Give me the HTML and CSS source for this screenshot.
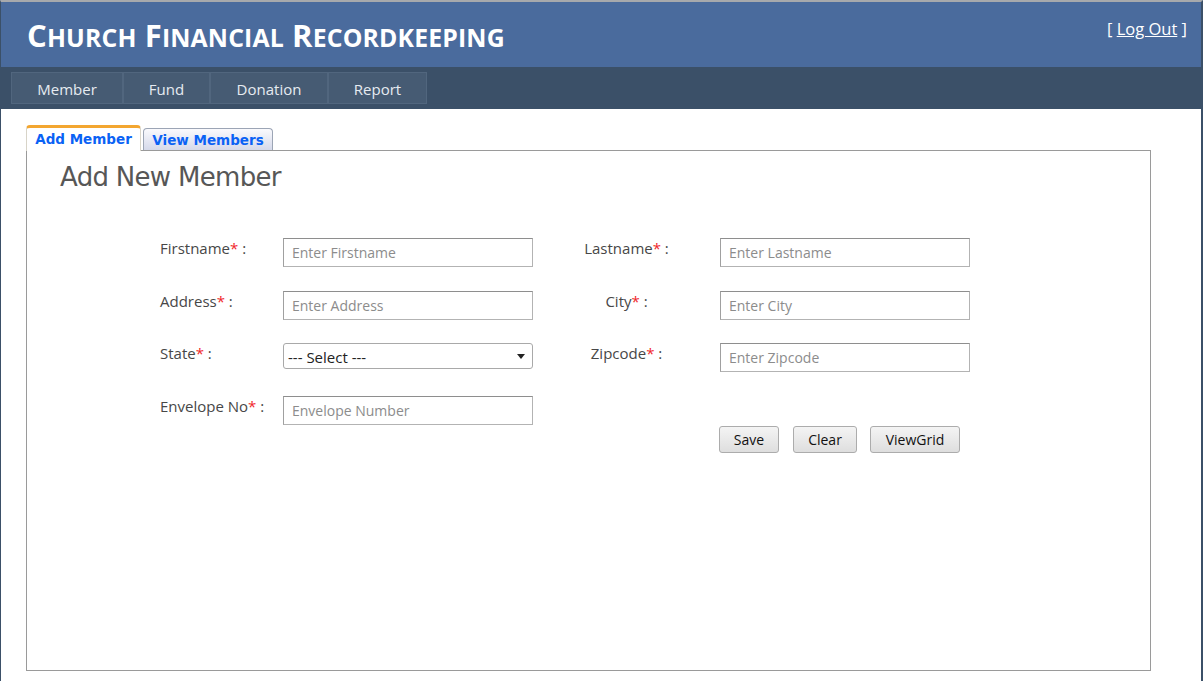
FILE: index.html
```html
<!DOCTYPE html>
<html lang="en">
<head>
<meta charset="utf-8">
<title>Church Financial Recordkeeping</title>
<link rel="stylesheet" href="styles.css">
</head>
<body>
<div class="page">
  <header class="header">
    <h1 class="title">C<span class="sc">hurch</span> F<span class="sc">inancial</span> R<span class="sc">ecordkeeping</span></h1>
    <div class="login">[ <a href="#" class="logout">Log Out</a> ]</div>
  </header>
  <nav class="nav">
    <ul class="menu">
      <li class="menu-item w-member">Member</li>
      <li class="menu-item w-fund">Fund</li>
      <li class="menu-item w-donation">Donation</li>
      <li class="menu-item w-report">Report</li>
    </ul>
  </nav>
  <main class="content">
    <div class="tabs">
      <div class="tab tab-active">Add Member</div>
      <div class="tab tab-idle">View Members</div>
    </div>
    <section class="panel">
      <h2 class="heading">Add New Member</h2>
      <form class="form">
        <label class="lbl">Firstname<span class="req">*</span> :</label>
        <input class="field" type="text" placeholder="Enter Firstname">
        <label class="lbl lbl-c">Lastname<span class="req">*</span> :</label>
        <input class="field" type="text" placeholder="Enter Lastname">

        <label class="lbl">Address<span class="req">*</span> :</label>
        <input class="field" type="text" placeholder="Enter Address">
        <label class="lbl lbl-c">City<span class="req">*</span> :</label>
        <input class="field" type="text" placeholder="Enter City">

        <label class="lbl">State<span class="req">*</span> :</label>
        <div class="select-wrap">
          <select class="select"><option>--- Select ---</option></select>
        </div>
        <label class="lbl lbl-c">Zipcode<span class="req">*</span> :</label>
        <input class="field" type="text" placeholder="Enter Zipcode">

        <label class="lbl">Envelope No<span class="req">*</span> :</label>
        <input class="field" type="text" placeholder="Envelope Number">
      </form>
      <div class="actions">
        <button class="btn b-save" type="button">Save</button>
        <button class="btn b-clear" type="button">Clear</button>
        <button class="btn b-grid" type="button">ViewGrid</button>
      </div>
    </section>
  </main>
</div>
</body>
</html>
```

FILE: styles.css
```css
* { box-sizing: border-box; }
html, body { margin: 0; padding: 0; height: 100%; }
body {
  font-family: "Open Sans", "Liberation Sans", sans-serif;
  background: #ffffff;
  overflow: hidden;
}
.page {
  height: 681px;
  display: flex;
  flex-direction: column;
  border-top: 2px solid #a7a9ac;
  border-left: 1px solid #3b5068;
  border-right: 2px solid #3b5068;
}
.header {
  height: 65px;
  flex: none;
  background: #4a6b9d;
  display: flex;
  justify-content: space-between;
  align-items: flex-start;
  padding: 0 14px 0 26px;
}
.title {
  margin: 0;
  padding-top: 15px;
  font-family: "Open Sans", sans-serif;
  font-weight: 700;
  font-size: 31px;
  line-height: 36px;
  color: #ffffff;
  letter-spacing: 0.15px;
  white-space: nowrap;
}
.sc {
  font-size: 0.8em;
  text-transform: uppercase;
}
.login {
  padding-top: 17px;
  font-size: 16.5px;
  line-height: 20px;
  color: #ffffff;
}
.logout { color: #ffffff; text-decoration: underline; }
.nav {
  height: 42px;
  flex: none;
  background: #3b5068;
  padding: 5px 10px;
}
.menu {
  list-style: none;
  margin: 0;
  padding: 0;
  display: flex;
  height: 32px;
}
.menu-item {
  height: 32px;
  border: 1px solid #51667e;
  background: #465b73;
  color: #e6ebf1;
  font-size: 15px;
  line-height: 31px;
  padding-top: 1px;
  text-align: center;
}
.w-member { width: 112px; }
.w-fund { width: 87px; }
.w-donation { width: 118px; }
.w-report { width: 99px; }
.content {
  flex: 1;
  display: flex;
  flex-direction: column;
  padding: 16px 50px 10px 25px;
  min-height: 0;
}
.tabs {
  display: flex;
  align-items: flex-end;
  gap: 2px;
  height: 25px;
  flex: none;
  position: relative;
  z-index: 1;
}
.tab {
  font-family: "DejaVu Sans", Verdana, sans-serif;
  font-weight: 700;
  font-size: 13.5px;
  color: #0a62f5;
  text-align: center;
  border-radius: 4px 4px 0 0;
}
.tab-active {
  width: 115px;
  height: 26px;
  margin-bottom: -1px;
  background: #ffffff;
  border: 1px solid #d8d4c8;
  border-top: 3px solid #f3a630;
  border-bottom: none;
  line-height: 23px;
}
.tab-idle {
  width: 130px;
  height: 22px;
  background: linear-gradient(#fafafd, #d5d9ea);
  border: 1px solid #9ca5b5;
  border-bottom: none;
  line-height: 22px;
}
.panel {
  flex: 1;
  border: 1px solid #9a9a9a;
  padding: 11px 33px;
}
.heading {
  margin: 0;
  font-family: "DejaVu Sans", Verdana, sans-serif;
  font-weight: 400;
  font-size: 26px;
  line-height: 30px;
  color: #575757;
  letter-spacing: -0.7px;
}
.form {
  margin: 46px 0 0 100px;
  display: grid;
  grid-template-columns: 123px 250px 187px 250px;
  grid-auto-rows: 30px;
  row-gap: 22.5px;
  align-items: start;
}
.lbl {
  font-size: 15px;
  line-height: 20px;
  color: #474747;
}
.lbl-c { text-align: center; }
.req { color: #f0262b; }
.field {
  width: 250px;
  height: 29px;
  margin: 0;
  border: 1px solid #b3b3b3;
  border-top-color: #8e8e8e;
  border-left-color: #a0a0a0;
  padding: 0 8px;
  font-family: "Open Sans", sans-serif;
  font-size: 14px;
  color: #222;
  background: #fff;
  outline: none;
}
.field::placeholder { color: #8c8c8c; }
.select-wrap {
  position: relative;
  width: 250px;
  height: 26px;
}
.select {
  width: 250px;
  height: 26px;
  margin: 0;
  appearance: none;
  -webkit-appearance: none;
  border: 1px solid #a9a9a9;
  border-radius: 3px;
  background: #ffffff;
  padding: 2px 4px 0;
  font-family: "Open Sans", sans-serif;
  font-size: 15px;
  color: #222;
}
.select-wrap::after {
  content: "";
  position: absolute;
  right: 8px;
  top: 11px;
  border-left: 4.5px solid transparent;
  border-right: 4.5px solid transparent;
  border-top: 5px solid #222;
  pointer-events: none;
}
.actions {
  display: flex;
  margin: 0 0 0 659px;
  gap: 0;
}
.btn {
  height: 27px;
  margin: 0;
  padding: 0;
  border: 1px solid #acacac;
  border-radius: 3px;
  background: linear-gradient(#f4f4f4, #dedede);
  font-family: "Open Sans", sans-serif;
  font-size: 14px;
  color: #111;
  line-height: 25px;
}
.b-save { width: 60px; }
.b-clear { width: 64px; margin-left: 14px; }
.b-grid { width: 90px; margin-left: 13px; }
```
